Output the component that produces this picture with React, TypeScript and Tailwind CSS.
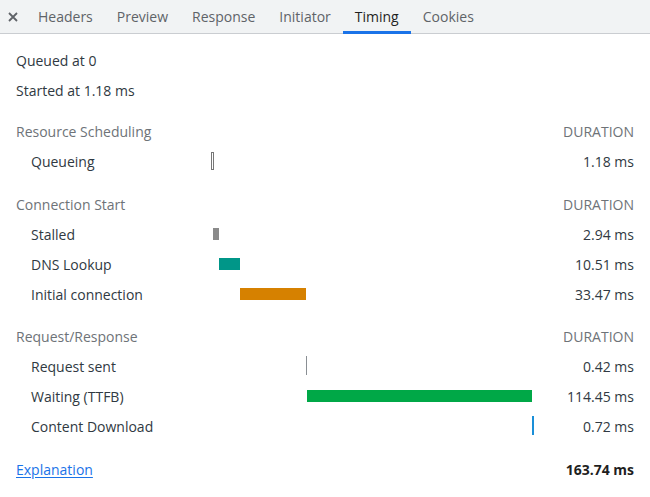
import React from "react"

type Phase = {
  label: string
  start: number
  duration: number
  kind: "outline" | "line" | "bar"
  color: string
}

type Section = {
  title: string
  gap: string
  phases: Phase[]
}

const TOTAL = 163.74
const TRACK = 323

const sections: Section[] = [
  {
    title: "Resource Scheduling",
    gap: "mt-[11px]",
    phases: [{ label: "Queueing", start: 0, duration: 1.18, kind: "outline", color: "#777" }],
  },
  {
    title: "Connection Start",
    gap: "mt-[13px]",
    phases: [
      { label: "Stalled", start: 1.18, duration: 2.94, kind: "bar", color: "#8a8a8a" },
      { label: "DNS Lookup", start: 4.12, duration: 10.51, kind: "bar", color: "#009688" },
      { label: "Initial connection", start: 14.63, duration: 33.47, kind: "bar", color: "#d68100" },
    ],
  },
  {
    title: "Request/Response",
    gap: "mt-[12px]",
    phases: [
      { label: "Request sent", start: 48.1, duration: 0.42, kind: "line", color: "#8a8f94" },
      { label: "Waiting (TTFB)", start: 48.52, duration: 114.45, kind: "bar", color: "#00a847" },
      { label: "Content Download", start: 162.97, duration: 0.72, kind: "line", color: "#1a8fd8" },
    ],
  },
]

const tabs = ["Headers", "Preview", "Response", "Initiator", "Timing", "Cookies"]

function fmt(ms: number) {
  return `${ms.toFixed(2)} ms`
}

function PhaseBar({ phase }: { phase: Phase }) {
  const left = (phase.start / TOTAL) * TRACK
  const width = (phase.duration / TOTAL) * TRACK

  if (phase.kind === "outline") {
    return (
      <div
        className="absolute top-[6px] h-[18px] border border-[#777] bg-white"
        style={{ left, width: Math.max(width, 3) }}
      />
    )
  }
  if (phase.kind === "line") {
    return (
      <div
        className="absolute top-[5px] h-[19px]"
        style={{ left, width: Math.max(width, phase.color === "#1a8fd8" ? 2 : 1), backgroundColor: phase.color }}
      />
    )
  }
  return (
    <div
      className="absolute top-[9px] h-[12px]"
      style={{ left, width, backgroundColor: phase.color }}
    />
  )
}

export default function App() {
  return (
    <div
      className="w-[650px] h-[497px] bg-white text-[14px] text-[#303942] overflow-hidden"
      style={{ fontFamily: '"Open Sans", "Noto Sans", sans-serif' }}
    >
      {/* tab strip */}
      <div className="flex h-[34px] items-stretch border-b border-[#cacdd1] bg-[#f1f3f4]">
        <div className="flex w-[25px] items-center justify-center">
          <svg width="10" height="10" viewBox="0 0 10 10">
            <path d="M1 1L9 9M9 1L1 9" stroke="#5f6368" strokeWidth="1.8" />
          </svg>
        </div>
        <div className="flex pl-[1px]">
          {tabs.map((t) => (
            <div
              key={t}
              className={`relative flex items-center px-[12px] text-[14px] ${
                t === "Timing" ? "text-[#1f1f1f]" : "text-[#5f6368]"
              }`}
            >
              {t}
              {t === "Timing" && (
                <div className="absolute bottom-[-1px] left-0 right-0 h-[3px] bg-[#1a73e8]" />
              )}
            </div>
          ))}
        </div>
      </div>

      <div className="px-4 pt-[11px]">
        <div className="flex h-[30px] items-center">Queued at 0</div>
        <div className="flex h-[30px] items-center">Started at 1.18 ms</div>

        {sections.map((s) => (
          <div key={s.title} className={s.gap}>
            <div className="flex h-[30px] items-center justify-between text-[#6e7378]">
              <span>{s.title}</span>
              <span>DURATION</span>
            </div>
            {s.phases.map((p) => (
              <div key={p.label} className="flex h-[30px] items-center">
                <div className="w-[195px] pl-[15px]">{p.label}</div>
                <div className="relative h-[30px] w-[323px]">
                  <PhaseBar phase={p} />
                </div>
                <div className="flex-1 text-right">{fmt(p.duration)}</div>
              </div>
            ))}
          </div>
        ))}

        <div className="mt-[13px] flex h-[30px] items-center justify-between">
          <a href="#" className="text-[#1a73e8] underline underline-offset-2">
            Explanation
          </a>
          <span className="font-bold text-[#1f1f1f]">{fmt(TOTAL)}</span>
        </div>
      </div>
    </div>
  )
}
